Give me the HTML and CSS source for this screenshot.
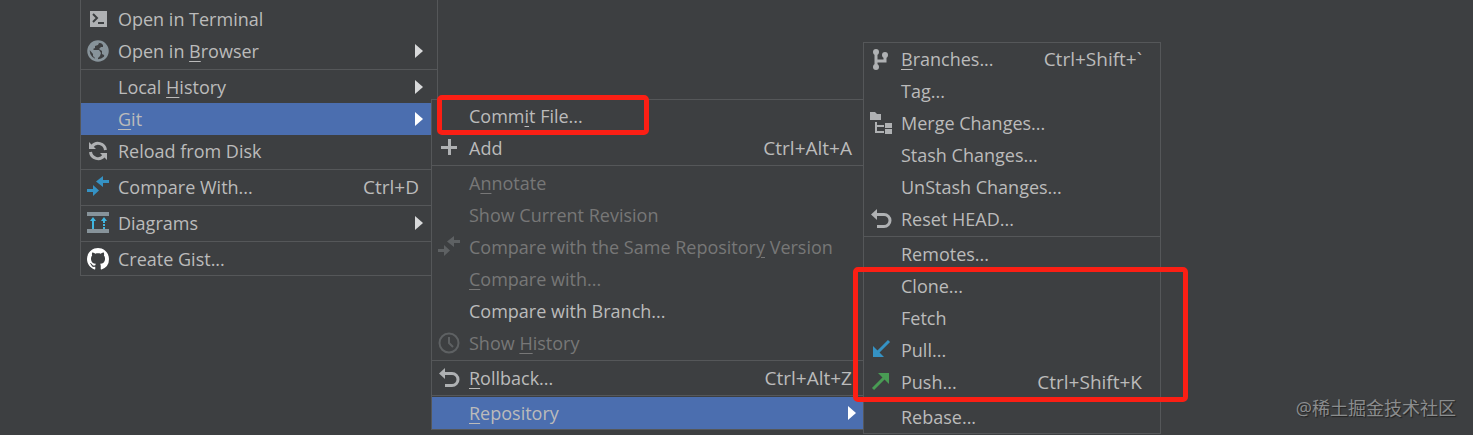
FILE: index.html
```
<!DOCTYPE html>
<html lang="en">
<head>
    <meta charset="UTF-8">
    <meta name="viewport" content="width=device-width, initial-scale=1.0">
    <title>Git</title>
    <link rel="stylesheet" href="styles.css">
</head>
<body>
    <!-- context menu -->
    <ul class="menu menu-file">
        <li><button class="item">
            <svg class="icon" viewBox="0 0 22 22"><path fill="#afb1b3" d="M3 3h17v16H3z"/><path fill="none" stroke="#3c3f41" stroke-width="2" d="M6 6l4 4-4 4M11 15h6"/></svg>
            <span class="label">Open in Terminal</span>
        </button></li>
        <li><button class="item">
            <svg class="icon" viewBox="0 0 22 22"><circle cx="11" cy="11" r="9.5" fill="none" stroke="#87939a" stroke-width="2.5"/><path fill="#87939a" d="M1 8l3-5 6-2 2 2-1 2-3 1v2l-2 1 1 1h5l2 3-1 3-2 2v3l-3 0v-3l-2-2v-2zM14 2l4 2 3 5v5l-3 4-1-3-2-1v-3l-3-2 2-2h2V5z"/></svg>
            <span class="label">Open in <u>B</u>rowser</span><span class="arrow"></span>
        </button></li>
        <li class="sep"></li>
        <li><button class="item"><span class="icon"></span><span class="label">Local <u>H</u>istory</span><span class="arrow"></span></button></li>
        <li><button class="item selected"><span class="icon"></span><span class="label"><u>G</u>it</span><span class="arrow"></span></button></li>
        <li><button class="item">
            <svg class="icon" viewBox="0 0 22 22"><g fill="none" stroke="#afb1b3" stroke-width="3"><path d="M5 6.500a7.500 7.500 0 0 1 13.500 3.500"/><path d="M17 15.500a7.500 7.500 0 0 1-13.500-3.500"/></g><path fill="#afb1b3" d="M2 2v7h7zM20 20v-7h-7z"/></svg>
            <span class="label">Reload from Disk</span>
        </button></li>
        <li class="sep"></li>
        <li><button class="item">
            <svg class="icon" viewBox="0 0 22 22"><path fill="#3592c4" d="M0 13h6V9l6 5.500L6 20v-4H0zM22 4h-6V0L9 5.500l7 5.500V7h6z"/></svg>
            <span class="label">Compare With...</span><span class="keys">Ctrl+D</span>
        </button></li>
        <li class="sep"></li>
        <li><button class="item">
            <svg class="icon" viewBox="0 0 22 22"><path fill="#87939a" d="M0 0h22v4H0zM0 17h22v4H0z"/><path fill="#40b6e0" d="M6 5l3 4H7v8H5V9H3zM17 5l3 4h-2v2h-2V9h-2zM16 12h2v2h-2zM16 15h2v2h-2z"/></svg>
            <span class="label">Diagrams</span><span class="arrow"></span>
        </button></li>
        <li class="sep"></li>
        <li><button class="item">
            <svg class="icon" viewBox="0 0 16 16"><path fill="#fff" d="M8 0C3.580 0 0 3.580 0 8c0 3.540 2.290 6.530 5.470 7.590.4.070.55-.17.55-.38 0-.19-.01-.82-.01-1.490-2.010.37-2.530-.49-2.690-.94-.09-.23-.48-.94-.82-1.130-.28-.15-.68-.52-.01-.53.63-.01 1.080.58 1.230.82.72 1.210 1.870.87 2.330.66.07-.52.28-.87.51-1.070-1.780-.2-3.640-.89-3.640-3.950 0-.87.31-1.590.82-2.150-.08-.2-.36-1.020.08-2.120 0 0 .67-.21 2.200.82.64-.18 1.320-.27 2-.27s1.360.09 2 .27c1.530-1.040 2.200-.82 2.200-.82.44 1.100.16 1.920.08 2.120.51.56.82 1.270.82 2.150 0 3.070-1.870 3.750-3.650 3.950.29.25.54.73.54 1.480 0 1.070-.01 1.930-.01 2.200 0 .21.15.46.55.38A8.010 8.010 0 0 0 16 8c0-4.420-3.580-8-8-8z"/></svg>
            <span class="label">Create Gist...</span>
        </button></li>
    </ul>

    <!-- Git -->
    <ul class="menu menu-git">
        <li><button class="item"><span class="icon"></span><span class="label">Comm<u>i</u>t File...</span></button></li>
        <li><button class="item">
            <svg class="icon" viewBox="0 0 22 22"><path fill="#afb1b3" d="M10 2h3v7h6v3h-6v6h-3v-6H3V9h7z"/></svg>
            <span class="label">Add</span><span class="keys">Ctrl+Alt+A</span>
        </button></li>
        <li class="sep"></li>
        <li><button class="item" disabled><span class="icon"></span><span class="label">A<u>n</u>notate</span></button></li>
        <li><button class="item" disabled><span class="icon"></span><span class="label">Show Current Revision</span></button></li>
        <li><button class="item" disabled>
            <svg class="icon" viewBox="0 0 22 22"><path fill="#5e6163" d="M0 13h6V9l6 5.500L6 20v-4H0zM22 4h-6V0L9 5.500l7 5.500V7h6z"/></svg>
            <span class="label">Compare with the Same Repositor<u>y</u> Version</span>
        </button></li>
        <li><button class="item" disabled><span class="icon"></span><span class="label"><u>C</u>ompare with...</span></button></li>
        <li><button class="item"><span class="icon"></span><span class="label">Compare with Branch...</span></button></li>
        <li><button class="item" disabled>
            <svg class="icon" viewBox="0 0 22 22"><g fill="none" stroke="#5e6163" stroke-width="2"><circle cx="11" cy="11" r="9.500"/><path d="M11 5v6l4 4"/></g></svg>
            <span class="label">Show <u>H</u>istory</span>
        </button></li>
        <li class="sep"></li>
        <li><button class="item">
            <svg class="icon" viewBox="0 0 22 22"><path fill="none" stroke="#afb1b3" stroke-width="3" d="M6 6.500h8a5.500 5.500 0 0 1 0 12H7"/><path fill="#afb1b3" d="M7 1v11L1 6.500z"/></svg>
            <span class="label"><u>R</u>ollback...</span><span class="keys">Ctrl+Alt+Z</span>
        </button></li>
        <li class="sep"></li>
        <li><button class="item selected"><span class="icon"></span><span class="label"><u>R</u>epository</span><span class="arrow"></span></button></li>
    </ul>

    <!-- Repository -->
    <ul class="menu menu-repo">
        <li><button class="item">
            <svg class="icon" viewBox="0 0 22 22"><g fill="#afb1b3"><circle cx="6" cy="4" r="3"/><circle cx="15" cy="7" r="3"/><circle cx="6" cy="19" r="3"/></g><path fill="none" stroke="#afb1b3" stroke-width="3" d="M6 4v15M15 7v6H6"/></svg>
            <span class="label"><u>B</u>ranches...</span><span class="keys">Ctrl+Shift+`</span>
        </button></li>
        <li><button class="item"><span class="icon"></span><span class="label">Tag...</span></button></li>
        <li><button class="item">
            <svg class="icon" viewBox="0 0 22 22"><path fill="#afb1b3" d="M0 0h5l2 2h4v6H0zM15 11h7v5h-7zM15 17h7v5h-7z"/><path fill="none" stroke="#afb1b3" stroke-width="2" d="M6 10v10h8M6 14h8"/></svg>
            <span class="label">Merge Changes...</span>
        </button></li>
        <li><button class="item"><span class="icon"></span><span class="label">Stash Changes...</span></button></li>
        <li><button class="item"><span class="icon"></span><span class="label">UnStash Changes...</span></button></li>
        <li><button class="item">
            <svg class="icon" viewBox="0 0 22 22"><path fill="none" stroke="#afb1b3" stroke-width="3" d="M6 6.500h8a5.500 5.500 0 0 1 0 12H7"/><path fill="#afb1b3" d="M7 1v11L1 6.500z"/></svg>
            <span class="label">Reset HEAD...</span>
        </button></li>
        <li class="sep"></li>
        <li><button class="item"><span class="icon"></span><span class="label">Remotes...</span></button></li>
        <li><button class="item"><span class="icon"></span><span class="label">Clone...</span></button></li>
        <li><button class="item"><span class="icon"></span><span class="label">Fetch</span></button></li>
        <li><button class="item">
            <svg class="icon" viewBox="0 0 22 22"><path fill="none" stroke="#3592c4" stroke-width="3" d="M19 2L7 14"/><path fill="#3592c4" d="M3 7v11h11z"/></svg>
            <span class="label">Pull...</span>
        </button></li>
        <li><button class="item">
            <svg class="icon" viewBox="0 0 22 22"><path fill="none" stroke="#499c54" stroke-width="3" d="M3 18L15 6"/><path fill="#499c54" d="M8 2h11v11z"/></svg>
            <span class="label">Push...</span><span class="keys">Ctrl+Shift+K</span>
        </button></li>
        <li class="sep"></li>
        <li><button class="item"><span class="icon"></span><span class="label">Rebase...</span></button></li>
    </ul>

    <div class="mark mark-commit"></div>
    <div class="mark mark-sync"></div>
    <p class="watermark" lang="zh">@稀土掘金技术社区</p>
</body>
</html>
```
FILE: styles.css
```
body {
    margin: 0;
    min-height: 100vh;
    position: relative;
    background-color: #3d3f41;
    color: #bbbbbb;
    font-family: "Open Sans", "Noto Sans CJK SC", sans-serif;
    font-size: 18px;
}

/* popups */
.menu {
    position: absolute;
    box-sizing: border-box;
    margin: 0;
    padding: 0;
    list-style: none;
    background-color: #3d3f41;
    border: 1px solid #555759;
}

.menu-file {
    top: 0;
    left: 80px;
    width: 358px;
    padding-top: 3px;
    border-top: none;
}

.menu-git {
    top: 99px;
    left: 431px;
    width: 440px;
}

.menu-repo {
    top: 42px;
    left: 863px;
    width: 298px;
}

.item {
    display: flex;
    align-items: center;
    width: 100%;
    height: 32px;
    padding: 0 18px 0 6px;
    border: none;
    background: none;
    color: inherit;
    font: inherit;
    text-align: left;
    white-space: nowrap;
}

.item:disabled {
    color: #777777;
}

.item.selected {
    background-color: #4b6eaf;
}

.icon {
    flex: none;
    width: 22px;
    height: 22px;
    margin-right: 9px;
}

.label {
    flex: 1;
}

.keys {
    font-size: 19px;
}

.item u {
    text-decoration-thickness: 1px;
    text-underline-offset: 3px;
}

.arrow {
    margin-right: -4px;
    border-left: 8px solid #d8d9da;
    border-top: 7px solid transparent;
    border-bottom: 7px solid transparent;
}

.selected .arrow {
    border-left-color: #ffffff;
}

.sep {
    height: 1px;
    padding: 1px 0;
    background-color: #555759;
    background-clip: content-box;
}

.menu-file .sep {
    padding-top: 2px;
}

/* red frames */
.mark {
    position: absolute;
    box-sizing: border-box;
    border: 5px solid #fb1f14;
    border-radius: 5px;
    pointer-events: none;
}

.mark-commit {
    top: 95px;
    left: 437px;
    width: 212px;
    height: 40px;
}

.mark-sync {
    top: 267px;
    left: 853px;
    width: 335px;
    height: 135px;
}

.watermark {
    position: absolute;
    right: 17px;
    bottom: 14px;
    margin: 0;
    color: #8b8d8e;
    font-size: 18px;
    line-height: 26px;
    text-shadow: 1px 1px 1px #222222;
}
```
